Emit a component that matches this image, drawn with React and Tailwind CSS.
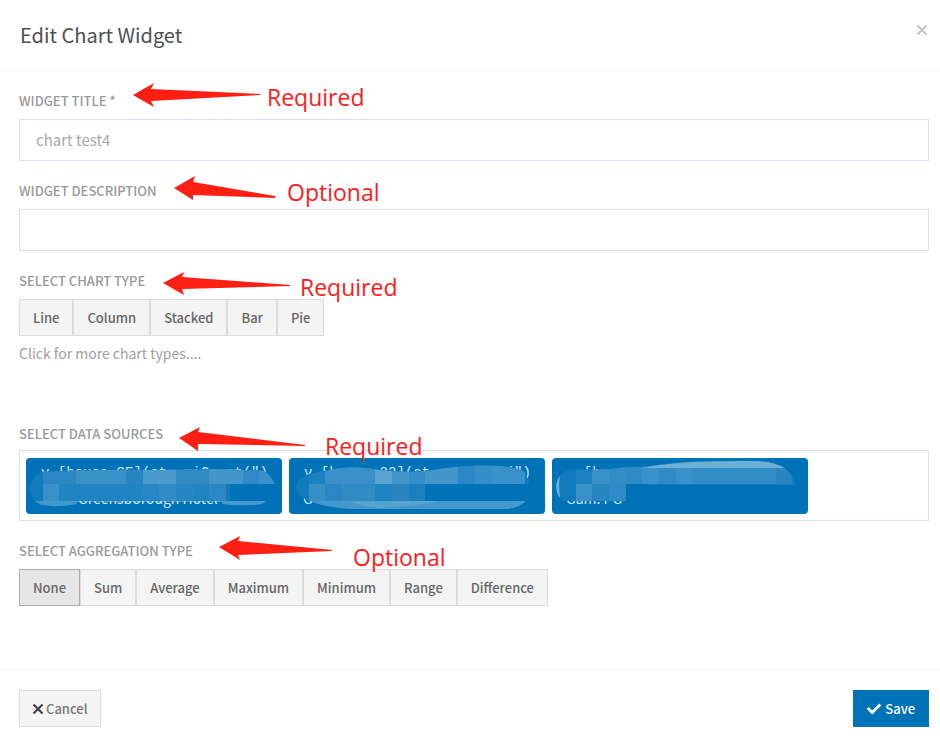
import { FaCheck } from 'react-icons/fa'

const chartTypes = ['Line', 'Column', 'Stacked', 'Bar', 'Pie']
const aggregations = ['None', 'Sum', 'Average', 'Maximum', 'Minimum', 'Range', 'Difference']

// Sources shown as chips, each one mostly hidden by a mosaic smear.
// Tiles are [x, width, colour], one list for each mosaic row.
const sources = [
  {
    id: 'a',
    top: 'v [house SE](st..miCount(")',
    bottom: 'Greensborough Hotel',
    bottomX: 52,
    smear: 'M4 30 Q6 18 16 14 Q60 11 130 12 Q200 10 238 13 Q245 18 249 26 L204 26 L204 43 L9 43 Q4 38 4 30Z',
    upper: [[17, 33, '#2a87c3'], [50, 50, '#3a90c8'], [100, 17, '#2785c2'], [117, 33, '#4a9acd'], [150, 33, '#308bc5'], [183, 34, '#4395ca'], [217, 16, '#308bc5'], [233, 17, '#3a90c8']],
    lower: [[17, 16, '#3a90c8'], [33, 17, '#2483c1'], [50, 67, '#2084c2'], [117, 16, '#2886c3'], [133, 17, '#308cc6'], [150, 17, '#2785c2'], [167, 16, '#2084c2'], [183, 17, '#2a87c3']],
    streaks: ['M9 43 L52 43 L50 46 Q36 49 24 48 Q12 47 9 43Z', 'M52 43 L240 43 Q238 47 224 47 Q208 48 196 46 L196 44 L52 44Z'],
  },
  {
    id: 'b',
    top: 'v [house 22](st         (")',
    bottom: 'G',
    bottomX: 14,
    smear: 'M7 28 Q8 16 36 13 Q64 6 90 12 Q125 16 150 11 Q180 6 212 8 Q228 10 236 14 L241 26 L136 26 L136 43 L20 43 Q7 38 7 28Z',
    upper: [[20, 16, '#1b80c0'], [36, 50, '#3a90c8'], [86, 17, '#5ca5d3'], [103, 17, '#4395ca'], [120, 16, '#358ec7'], [136, 33, '#4395ca'], [169, 17, '#2b88c4'], [186, 17, '#358ec7'], [203, 33, '#3a90c8']],
    lower: [[20, 16, '#3590c8'], [36, 17, '#2a87c3'], [53, 33, '#308bc5'], [86, 17, '#2084c2'], [103, 17, '#2785c2'], [120, 16, '#1a80c0']],
    streaks: ['M20 43 L237 43 Q230 50 218 51 L60 51 Q36 49 20 43Z', 'M60 43 L150 43 Q130 48 90 50 Q70 48 60 43Z'],
  },
  {
    id: 'c',
    top: '  [h',
    bottom: 'Gam. PG',
    bottomX: 14,
    smear: 'M4 28 Q6 12 24 11 Q50 13 74 9 L90 9 Q130 2 205 3 Q238 4 244 27 L90 27 L90 43 L12 43 Q4 40 4 28Z',
    upper: [[24, 16, '#1b80c0'], [40, 17, '#3a90c8'], [57, 17, '#328cc6'], [74, 16, '#2f8bc5'], [90, 17, '#3a90c8'], [107, 17, '#308bc5'], [124, 16, '#3a90c8'], [140, 84, '#338dc6'], [224, 16, '#2785c2']],
    lower: [[24, 16, '#3a90c8'], [40, 17, '#2785c2'], [57, 17, '#2f8bc5'], [74, 20, '#0072b8']],
    streaks: [],
    shine: ['M90 10 Q120 4 160 3 L205 3 Q230 4 238 10Z', 'M4 28 Q4 18 8 15 L7 28 L8 40 Q4 36 4 28Z'],
  },
]

// The arrows hang from the label row, so the points carry their own drop
function Note({ points, children, arrowClass, textClass }) {
  return (
    <>
      <svg className={`z-10 h-8 shrink-0 overflow-visible fill-[#ff1e12] ${arrowClass}`} aria-hidden="true">
        <polygon points={points} />
      </svg>
      <span className={`z-10 font-['Open_Sans',sans-serif] text-[23px] leading-8 text-[#ff1a1a] ${textClass}`}>
        {children}
      </span>
    </>
  )
}

function ButtonGroup({ labelledBy, items, active }) {
  return (
    <div role="group" aria-labelledby={labelledBy} className="flex flex-wrap">
      {items.map((item) => (
        <button
          key={item}
          type="button"
          aria-pressed={item === active}
          className={`h-[37px] border px-[13px] text-[13px] leading-5 font-medium text-[#666] ${
            item === active ? 'border-[#adadad] bg-[#e6e6e6]' : 'border-[#dcdcdc] bg-[#f4f4f4]'
          }`}
        >
          {item}
        </button>
      ))}
    </div>
  )
}

function SourceChip({ source }) {
  const clip = `smear-${source.id}`
  return (
    <li className="w-64 overflow-hidden rounded bg-[#0072b8]">
      <svg className="h-14 w-full" viewBox="0 0 256 56">
        <defs>
          <clipPath id={clip}>
            <path d={source.smear} />
          </clipPath>
        </defs>
        {source.streaks.map((d) => (
          <path key={d} d={d} fill="#5ca5d3" opacity="0.75" />
        ))}
        <text x="15" y="19" className="fill-[#d4e8f5] font-['Liberation_Mono',monospace] text-sm whitespace-pre">
          {source.top}
        </text>
        <text x={source.bottomX} y="46" className="fill-[#d4e8f5] font-['Noto_Sans_CJK_SC',sans-serif] text-sm">
          {source.bottom}
        </text>
        <g clipPath={`url(#${clip})`}>
          <rect width="256" height="56" fill="#127bbd" />
          {source.upper.map(([x, width, fill]) => (
            <rect key={x} x={x} width={width} height="26" fill={fill} />
          ))}
          {source.lower.map(([x, width, fill]) => (
            <rect key={x} x={x} y="26" width={width} height="17" fill={fill} />
          ))}
          {source.shine?.map((d) => (
            <path key={d} d={d} fill="#6cb0d8" />
          ))}
        </g>
      </svg>
    </li>
  )
}

const rowClass = 'flex h-5 items-center'
const labelClass = 'text-[13px] leading-5 font-medium whitespace-nowrap text-[#999] uppercase'
const inputClass =
  'mt-2 block h-[42px] w-full border border-[#dcdfe8] bg-white px-4 pb-[2px] text-[15px] leading-5 text-[#555] placeholder:text-[#a8a8a8] focus:outline-none'

export default function App() {
  return (
    <form className="bg-white font-['Noto_Sans_CJK_SC',sans-serif]" onSubmit={(e) => e.preventDefault()}>
      <header className="flex items-start justify-between border-b border-[#f2f2f2] pt-[19px] pr-3 pb-[19px] pl-5">
        <h1 className="text-xl leading-8 text-[#505050]">Edit Chart Widget</h1>
        <button type="button" aria-label="Close" className="py-[5px] text-[#c4c4c4]">
          <svg className="size-3" viewBox="0 0 12 12" fill="none" stroke="currentColor" strokeWidth="2.2">
            <path d="M1.5 1.5l9 9M10.5 1.5l-9 9" />
          </svg>
        </button>
      </header>

      <main className="pr-[11px] pl-[19px]">
        <section className="pt-5">
          <div className={rowClass}>
            <label htmlFor="title" className={`w-[113px] ${labelClass}`}>Widget Title *</label>
            <Note points="1,10 22,-2 19,4 128,9 128,10 19,16 22,22" arrowClass="w-[135px]" textClass="pb-2">
              Required
            </Note>
          </div>
          <input id="title" type="text" placeholder="chart test4" className={inputClass} />
        </section>

        <section className="pt-5">
          <div className={rowClass}>
            <label htmlFor="description" className={`w-[154px] ${labelClass}`}>Widget Description</label>
            <Note points="1,13 22,1 20,7 102,21 102,23 20,20 20,25" arrowClass="w-[114px]" textClass="pt-[2px]">
              Optional
            </Note>
          </div>
          <input id="description" type="text" className={inputClass} />
        </section>

        <section className="pt-5">
          <div className={rowClass}>
            <h2 id="chart-type" className={`w-[143px] ${labelClass}`}>Select Chart Type</h2>
            <Note points="1,18 22,7 20,12 128,20 128,21 20,24 22,30" arrowClass="w-[138px]" textClass="pt-3">
              Required
            </Note>
          </div>
          <div className="mt-2">
            <ButtonGroup labelledBy="chart-type" items={chartTypes} />
          </div>
          <a href="#more" className="mt-[7px] block text-sm leading-5 text-[#a0a0a0]">Click for more chart types....</a>
        </section>

        <section className="mt-[41px] pt-5">
          <div className={rowClass}>
            <h2 id="sources" className={`w-[159px] ${labelClass}`}>Select Data Sources</h2>
            <Note points="1,20 22,9 20,14 127,27 127,28 20,26 20,33" arrowClass="w-[147px]" textClass="pt-6">
              Required
            </Note>
          </div>
          <ul
            aria-labelledby="sources"
            className="mt-[6px] flex flex-wrap gap-[7px] border border-[#dcdfe8] px-[6px] pt-[7px] pb-[6px]"
          >
            {sources.map((source) => (
              <SourceChip key={source.id} source={source} />
            ))}
          </ul>
        </section>

        <section className="pt-5 pb-[63px]">
          <div className={rowClass}>
            <h2 id="aggregation" className={`w-[199px] ${labelClass}`}>Select Aggregation Type</h2>
            <Note points="1,12 22,1 20,6 114,15 114,16 20,20 22,25" arrowClass="w-[135px]" textClass="pt-3">
              Optional
            </Note>
          </div>
          <div className="mt-2">
            <ButtonGroup labelledBy="aggregation" items={aggregations} active="None" />
          </div>
        </section>
      </main>

      <footer className="flex items-center justify-between border-t border-[#f2f2f2] pt-5 pr-[11px] pb-4 pl-[19px]">
        <button
          type="button"
          className="flex h-[37px] items-center border border-[#dcdcdc] bg-[#f4f4f4] px-3 text-[13px] leading-5 font-medium text-[#777]"
        >
          <svg className="mr-[2px] size-3" viewBox="0 0 12 12" fill="none" stroke="#444" strokeWidth="2.2">
            <path d="M1.5 1.5l9 9M10.5 1.5l-9 9" />
          </svg>
          Cancel
        </button>
        <button
          type="submit"
          className="flex h-[37px] items-center gap-1 bg-[#0072b8] px-[14px] text-[13px] leading-5 font-medium text-white"
        >
          <FaCheck className="size-[14px]" />
          Save
        </button>
      </footer>
    </form>
  )
}
